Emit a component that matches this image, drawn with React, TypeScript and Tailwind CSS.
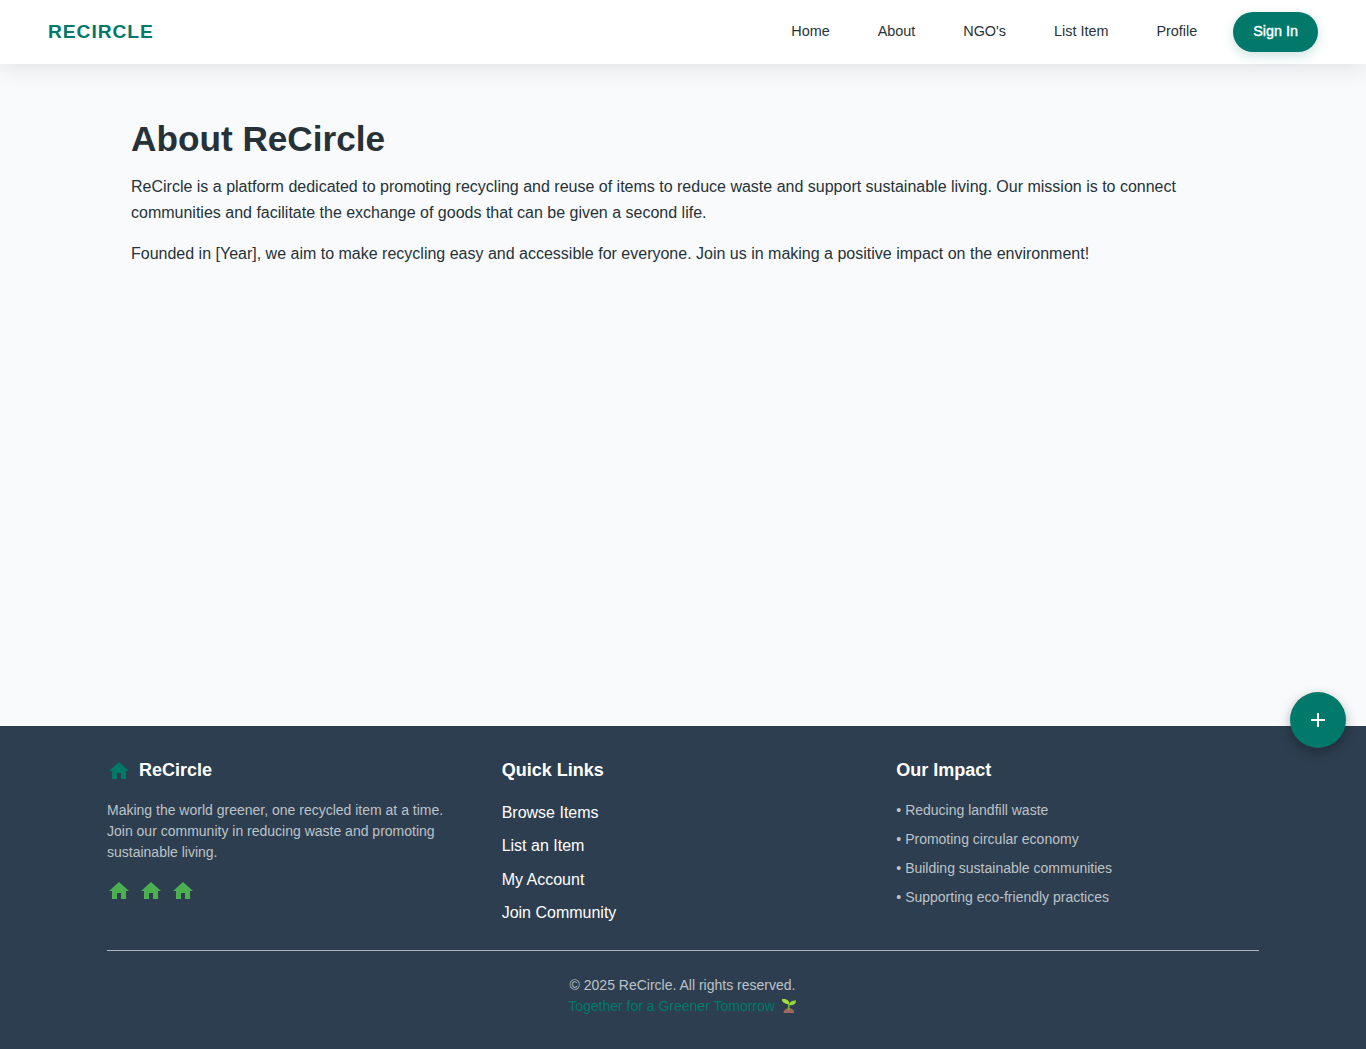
const navItems = ["Home", "About", "NGO's", "List Item", "Profile"];
const quickLinks = ["Browse Items", "List an Item", "My Account", "Join Community"];
const impacts = [
  "Reducing landfill waste",
  "Promoting circular economy",
  "Building sustainable communities",
  "Supporting eco-friendly practices",
];

function HomeIcon({ className }: { className: string }) {
  return (
    <svg viewBox="0 0 24 24" fill="currentColor" className={`size-6 shrink-0 ${className}`}>
      <path d="M10 20v-6h4v6h5v-8h3L12 3 2 12h3v8z" />
    </svg>
  );
}

function Seedling() {
  return (
    <svg viewBox="0 0 16 16" role="img" aria-label="Seedling" className="ml-0.5 inline-block size-4 align-[-3px]">
      <path d="M2.500 15c0-3 2.400-4.700 5.500-4.700s5.200 1.700 5.200 4.700z" fill="#a0675c" />
      <path d="M6.900 12V6h1.600v6z" fill="#7cb832" />
      <path d="M.8 1.200C4.800.6 8.400 2 8.300 6 4.200 6.200 1.200 4.500.8 1.200z" fill="#a5e03c" />
      <path d="M15 2.600c.1 3.300-2.300 5-6.900 4.700C8.200 3.800 11 2.600 15 2.600z" fill="#93d63a" />
    </svg>
  );
}

function Header() {
  return (
    <header className="relative z-10 flex h-16 items-center justify-between bg-white px-12 shadow-[0_4px_24px_rgba(0,0,0,0.1)]">
      <a href="#" className="text-[19.2px] leading-6 font-bold tracking-[0.96px] text-[#00796b]">RECIRCLE</a>
      <div className="flex items-center gap-9">
        <nav className="flex gap-12 pb-0.5 text-[14.4px] leading-5">
          {navItems.map((n) => (
            <a key={n} href="#">{n}</a>
          ))}
        </nav>
        <button className="h-10 rounded-[20px] bg-[#00796b] px-5 pb-0.5 text-[14.4px] leading-5 font-medium text-white shadow-[0_4px_12px_rgba(0,121,107,0.2)] [-webkit-text-stroke:0.4px_white]">
          Sign In
        </button>
      </div>
    </header>
  );
}

function Footer() {
  return (
    <footer className="h-[323px] bg-[#2d3e50] pt-8 text-white">
      <div className="mx-auto w-[1152px]">
        <div className="grid h-48 grid-cols-3 gap-8">
          <section>
            <div className="flex h-[26px] items-start gap-2">
              <HomeIcon className="mt-px text-[#00796b]" />
              <h3 className="text-[18px] leading-6 font-bold">ReCircle</h3>
            </div>
            <p className="mt-4 text-[14px] leading-[21px] text-[#bdc3c7]">
              Making the world greener, one recycled item at a time.
              <br />
              Join our community in reducing waste and promoting
              <br />
              sustainable living.
            </p>
            <div className="mt-4 flex gap-2 text-[#4caf50]">
              <HomeIcon className="" />
              <HomeIcon className="" />
              <HomeIcon className="" />
            </div>
          </section>
          <section>
            <h3 className="text-[18px] leading-6 font-bold">Quick Links</h3>
            <ul className="mt-[18px] space-y-[7.4px] text-base leading-[26px]">
              {quickLinks.map((l) => (
                <li key={l}><a href="#">{l}</a></li>
              ))}
            </ul>
          </section>
          <section>
            <h3 className="text-[18px] leading-6 font-bold">Our Impact</h3>
            <ul className="mt-[18px] space-y-2 text-[14px] leading-[21px] text-[#bdc3c7]">
              {impacts.map((l) => (
                <li key={l}>• {l}</li>
              ))}
            </ul>
          </section>
        </div>
        <div className="border-t border-[#b0b3b8] pt-6 pr-px text-center text-[14px] leading-[21px]">
          <p className="text-[#bdc3c7]">© 2025 ReCircle. All rights reserved.</p>
          <p className="text-[#00796b]">Together for a Greener Tomorrow <Seedling /></p>
        </div>
      </div>
    </footer>
  );
}

export default function App() {
  return (
    <div className="flex h-[1049px] flex-col bg-[#f8fafc] font-['Liberation_Sans',Arial,sans-serif] text-[#263238]">
      <Header />
      <main className="mx-auto w-[1104px] flex-1 pt-[54px]">
        <h1 className="text-[35.2px] leading-[42px] font-bold">About ReCircle</h1>
        <p className="mt-[14px] text-base leading-[25.6px]">
          ReCircle is a platform dedicated to promoting recycling and reuse of items to reduce waste and support sustainable living. Our mission is to connect communities and facilitate the exchange of goods that can be given a second life.
        </p>
        <p className="mt-4 text-base leading-[25.6px]">
          Founded in [Year], we aim to make recycling easy and accessible for everyone. Join us in making a positive impact on the environment!
        </p>
      </main>
      <Footer />
      <button
        aria-label="Add item"
        className="fixed top-[692px] right-5 flex size-14 items-center justify-center rounded-full bg-[#00796b] text-white shadow-[0_4px_12px_rgba(0,0,0,0.3)]"
      >
        <svg viewBox="0 0 24 24" fill="currentColor" className="size-6">
          <path d="M19 13h-6v6h-2v-6H5v-2h6V5h2v6h6z" />
        </svg>
      </button>
    </div>
  );
}
